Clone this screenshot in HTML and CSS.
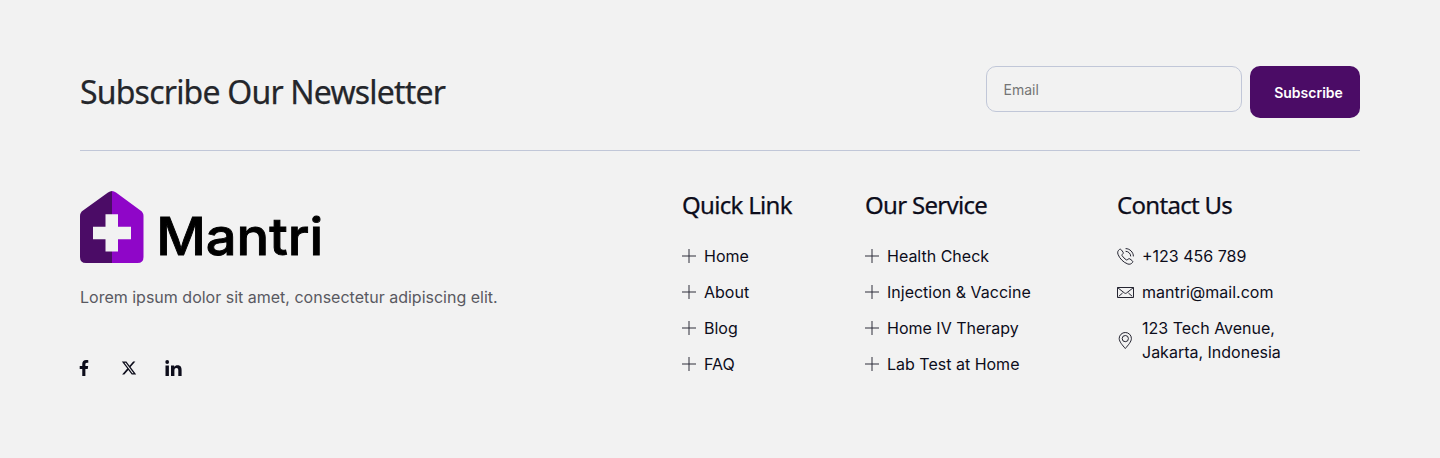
FILE: index.html
```
<!DOCTYPE html>
<html lang="en">
<head>
    <meta charset="UTF-8">
    <meta name="viewport" content="width=device-width, initial-scale=1.0">
    <title>Mantri</title>
    <link rel="stylesheet" href="styles.css">
</head>
<body>

    <!-- Shared icon for the link lists -->
    <svg class="sprite" width="0" height="0">
        <symbol id="plus" viewBox="0 0 14 14">
            <path d="M7 0V14M0 7H14" fill="none" stroke="currentColor"/>
        </symbol>
    </svg>

    <footer class="footer">
        <!-- Newsletter -->
        <div class="newsletter">
            <h2>Subscribe Our Newsletter</h2>
            <form class="newsletter-form">
                <input type="email" name="email" placeholder="Email">
                <button type="button">Subscribe</button>
            </form>
        </div>

        <div class="footer-columns">
            <!-- Logo and social links -->
            <div class="brand">
                <svg class="logo" width="250" height="84" viewBox="0 0 250 84">
                    <path d="M32 1Q30 1 28 2.500L3 20.500Q0 22.500 0 26V67Q0 73 6 73H32Z" fill="#4b0c66"/>
                    <path d="M32 1Q34 1 36 2.500L60.500 20.500Q63.500 22.500 63.500 26V67Q63.500 73 57.500 73H32Z" fill="#8f06c8"/>
                    <path d="M25.500 24.300H38V36.700H51V49.200H38V61.600H25.500V49.200H13V36.700H25.500Z" fill="#f2f2f2"/>
                    <text class="logo-text" x="76.200" y="65" textLength="167" lengthAdjust="spacingAndGlyphs">Mantri</text>
                </svg>
                <p>Lorem ipsum dolor sit amet, consectetur adipiscing elit.</p>
                <div class="social">
                    <a href="#" aria-label="Facebook">
                        <svg width="10" height="16" viewBox="0 0 320 512"><path d="M279.140 288l14.220-92.660h-88.910v-60.130c0-25.350 12.420-50.060 52.240-50.060h40.420V6.260S260.430 0 225.360 0c-73.220 0-121.080 44.380-121.080 124.720v70.620H22.890V288h81.390v224h100.170V288z" fill="currentColor"/></svg>
                    </a>
                    <a href="#" aria-label="X">
                        <svg width="16" height="16" viewBox="0 0 512 512"><path d="M389.200 48h70.600L305.600 224.200 487 464H345L233.700 318.600 106.500 464H35.800L200.700 275.500 26.800 48H172.400L272.900 180.900 389.200 48zM364.400 421.800h39.100L151.100 88h-42L364.400 421.800z" fill="currentColor"/></svg>
                    </a>
                    <a href="#" aria-label="LinkedIn">
                        <svg width="17" height="16" viewBox="0 0 17 16"><path d="M.500 5.500H3.900V16H.500ZM6 5.500H9.200V7C9.900 5.800 11 5.200 12.500 5.200 15.900 5.200 16.600 7.400 16.600 10.200V16H13.300V10.900C13.300 9.600 13.200 8.100 11.500 8.100 9.800 8.100 9.400 9.400 9.400 10.800V16H6Z" fill="currentColor"/><circle cx="2.200" cy="2" r="1.900" fill="currentColor"/></svg>
                    </a>
                </div>
            </div>

            <div class="column column-links">
                <h3>Quick Link</h3>
                <ul>
                    <li><svg class="plus" width="14" height="14"><use href="#plus"/></svg><a href="#">Home</a></li>
                    <li><svg class="plus" width="14" height="14"><use href="#plus"/></svg><a href="#">About</a></li>
                    <li><svg class="plus" width="14" height="14"><use href="#plus"/></svg><a href="#">Blog</a></li>
                    <li><svg class="plus" width="14" height="14"><use href="#plus"/></svg><a href="#">FAQ</a></li>
                </ul>
            </div>

            <div class="column column-services">
                <h3>Our Service</h3>
                <ul>
                    <li><svg class="plus" width="14" height="14"><use href="#plus"/></svg><a href="#">Health Check</a></li>
                    <li><svg class="plus" width="14" height="14"><use href="#plus"/></svg><a href="#">Injection &amp; Vaccine</a></li>
                    <li><svg class="plus" width="14" height="14"><use href="#plus"/></svg><a href="#">Home IV Therapy</a></li>
                    <li><svg class="plus" width="14" height="14"><use href="#plus"/></svg><a href="#">Lab Test at Home</a></li>
                </ul>
            </div>

            <div class="column column-contact">
                <h3>Contact Us</h3>
                <ul>
                    <li>
                        <svg class="line-icon" width="17" height="17" viewBox="0 0 17 17"><path d="M2.300 1.600C.800 2.700.300 4.300 1 6.300 2.500 10.400 6.500 14.500 10.800 16 12.600 16.600 14.200 16 15.400 14.600 15.900 14 15.900 13.300 15.300 12.800L12.900 10.900C12.300 10.500 11.700 10.500 11.200 11L10.400 11.800C10 12.100 9.600 12.100 9.200 11.800 7.600 10.700 6.200 9.300 5.100 7.700 4.800 7.300 4.900 6.900 5.200 6.500L6 5.700C6.400 5.300 6.400 4.700 6.100 4.200L4.200 1.700C3.700 1.100 3 1.100 2.300 1.600ZM8.600.600C12.800.600 16.400 4.200 16.400 8.400M8.600 3.300C11.400 3.300 13.700 5.600 13.700 8.400"/></svg>
                        <span>+123 456 789</span>
                    </li>
                    <li>
                        <svg class="line-icon" width="17" height="17" viewBox="0 0 17 17"><path d="M.500 3.500H16.500V13.500H.500ZM.700 3.700L7.500 9Q8.500 9.800 9.500 9L16.300 3.700M1.800 12.300L5.600 9M15.200 12.300L11.400 9"/></svg>
                        <span>mantri@mail.com</span>
                    </li>
                    <li>
                        <svg class="line-icon" width="17" height="17" viewBox="0 0 17 17"><path d="M8.300 16.500C5.500 13.200 2.200 9.700 2.200 6.500A6.100 6 0 0 1 14.400 6.500C14.400 9.700 11.100 13.200 8.300 16.500Z"/><circle cx="8.300" cy="6.600" r="3.100"/></svg>
                        <span>123 Tech Avenue,<br>Jakarta, Indonesia</span>
                    </li>
                </ul>
            </div>
        </div>
    </footer>

</body>
</html>
```
FILE: styles.css
```
* {
    box-sizing: border-box;
}

body {
    margin: 0;
    background-color: #f2f2f2;
    color: #0d0d1b;
    font-family: Inter, sans-serif;
    font-size: 16px;
    line-height: 24px;
}

h2, h3, p, ul {
    margin: 0;
    padding: 0;
}

h2, h3 {
    font-family: "Noto Sans", sans-serif;
    font-weight: 400;
    -webkit-text-stroke: 0.25px currentColor;
}

a {
    color: inherit;
    text-decoration: none;
}

.sprite {
    position: absolute;
}

.footer {
    min-height: 458px;
    padding: 66px 80px 0;
}

/* Newsletter */
.newsletter {
    display: flex;
    justify-content: space-between;
    align-items: center;
    height: 85px;
    padding-bottom: 32px;
    border-bottom: 1px solid #c1c7d8;
}

.newsletter h2 {
    color: #24262b;
    font-size: 32px;
    line-height: 40px;
    letter-spacing: -0.8px;
}

.newsletter-form {
    display: flex;
    align-items: flex-start;
    gap: 8px;
}

.newsletter-form input {
    width: 256px;
    height: 46px;
    padding: 0 16px;
    border: 1px solid #c1c7d8;
    border-radius: 10px;
    background: transparent;
    font-family: inherit;
    font-size: 14px;
    text-indent: 0.5px;
}

.newsletter-form input::placeholder {
    color: #757575;
}

.newsletter-form button {
    width: 110px;
    height: 52px;
    padding: 0 16px 0 23px;
    border: none;
    border-radius: 10px;
    background-color: #4b0c66;
    color: #fff;
    font-family: inherit;
    font-size: 14px;
    font-weight: 600;
    cursor: pointer;
}

/* Footer columns */
.footer-columns {
    display: flex;
    padding-top: 39px;
}

.brand {
    width: 602px;
}

.logo {
    display: block;
}

.logo-text {
    fill: #000;
    stroke: #000;
    stroke-width: 0.9px;
    font-size: 52px;
    font-weight: 500;
}

.brand p {
    margin-top: 11px;
    color: #595961;
}

.social {
    display: flex;
    align-items: center;
    margin: 51px 0 0 -1px;
}

.social a {
    display: flex;
    margin-right: 32px;
}

.social a:nth-child(2) {
    margin-right: 28px;
}

.column h3 {
    font-size: 24px;
    line-height: 30px;
    letter-spacing: -0.7px;
}

.column ul {
    margin-top: 24px;
    list-style: none;
}

.column li {
    display: flex;
    align-items: center;
    gap: 8px;
    margin-bottom: 12px;
}

.column-links {
    width: 183px;
}

.column-services {
    width: 252px;
}

.plus {
    opacity: 0.85;
}

.line-icon {
    fill: none;
    stroke: currentColor;
    stroke-width: 0.9;
}
```
